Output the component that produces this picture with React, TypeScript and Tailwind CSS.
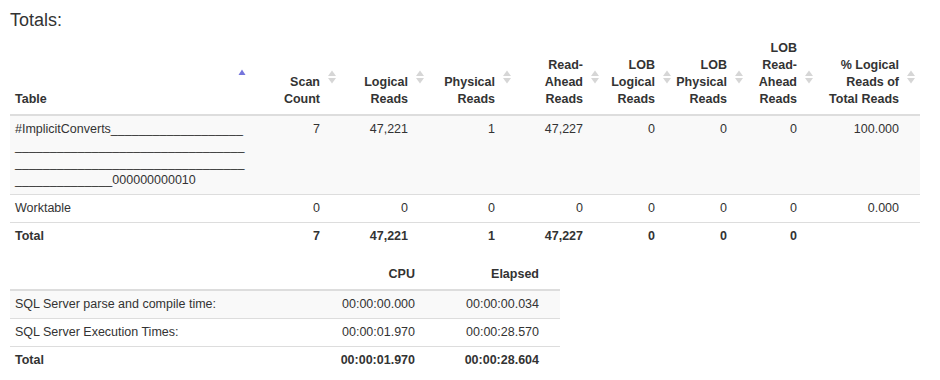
import React from 'react';

interface Column {
  label: string;
  width: string;
}

const columns: Column[] = [
  { label: 'Scan Count', width: 'w-[89px]' },
  { label: 'Logical Reads', width: 'w-[88px]' },
  { label: 'Physical Reads', width: 'w-[87px]' },
  { label: 'Read-Ahead Reads', width: 'w-[88px]' },
  { label: 'LOB Logical Reads', width: 'w-[72px]' },
  { label: 'LOB Physical Reads', width: 'w-[72px]' },
  { label: 'LOB Read-Ahead Reads', width: 'w-[70px]' },
  { label: '% Logical Reads of Total Reads', width: 'w-[102px]' },
];

const tempName =
  '#ImplicitConverts' + '_'.repeat(99) + '000000000010';

const rows = [
  { table: tempName, values: ['7', '47,221', '1', '47,227', '0', '0', '0', '100.000'] },
  { table: 'Worktable', values: ['0', '0', '0', '0', '0', '0', '0', '0.000'] },
];

const totals = ['7', '47,221', '1', '47,227', '0', '0', '0', ''];

const times = [
  { label: 'SQL Server parse and compile time:', cpu: '00:00:00.000', elapsed: '00:00:00.034' },
  { label: 'SQL Server Execution Times:', cpu: '00:00:01.970', elapsed: '00:00:28.570' },
];

// little sort glyph on the right of every header cell
const SortIcon: React.FC<{ active?: boolean }> = ({ active }) => {
  if (active) {
    return (
      <svg width="8" height="14" viewBox="0 0 8 14" className="absolute right-[6px] top-[calc(50%-5px)]">
        <polygon points="0.5,6 4,0.5 7.5,6" fill="#7575dc" />
      </svg>
    );
  }
  return (
    <svg width="8" height="14" viewBox="0 0 8 14" className="absolute right-[5px] top-[calc(50%-4px)]">
      <polygon points="0,6 4,0.5 8,6" fill="#d6d6d6" />
      <polygon points="0,8 8,8 4,13.5" fill="#d6d6d6" />
    </svg>
  );
};

export default function App() {
  return (
    <div className="min-h-[380px] w-[940px] bg-white px-[10px] pt-[10px] font-['Liberation_Sans',Arial,sans-serif] text-[12.5px] leading-[17.143px] text-[#333]">
      <h3 className="text-[18px] leading-[20px] font-normal">Totals:</h3>

      <table className="mt-[5px] w-[910px] table-fixed">
        <colgroup>
          <col className="w-[242px]" />
          {columns.map((c) => (
            <col key={c.label} className={c.width} />
          ))}
        </colgroup>
        <thead>
          <tr>
            <th className="relative border-b-2 border-[#ddd] pt-[5px] pb-[5px] pl-[5px] pr-[21px] text-left align-bottom font-bold">
              Table
              <SortIcon active />
            </th>
            {columns.map((c) => (
              <th
                key={c.label}
                className="relative border-b-2 border-[#ddd] pt-[5px] pb-[5px] pl-0 pr-[21px] text-right align-bottom font-bold"
              >
                {c.label}
                <SortIcon />
              </th>
            ))}
          </tr>
        </thead>
        <tbody>
          {rows.map((r, i) => (
            <tr key={i} className={i % 2 === 0 ? 'bg-[#f9f9f9]' : ''}>
              <td className="border-t border-[#ddd] py-[5px] pl-[5px] pr-[5px] align-top break-all">{r.table}</td>
              {r.values.map((v, j) => (
                <td key={j} className="border-t border-[#ddd] py-[5px] pl-0 pr-[21px] text-right align-top">
                  {v}
                </td>
              ))}
            </tr>
          ))}
        </tbody>
        <tfoot>
          <tr className="font-bold">
            <td className="border-t border-[#ddd] py-[5px] pl-[5px]">Total</td>
            {totals.map((v, j) => (
              <td key={j} className="border-t border-[#ddd] py-[5px] pl-0 pr-[21px] text-right">
                {v}
              </td>
            ))}
          </tr>
        </tfoot>
      </table>

      <table className="mt-[11px] w-[550px] table-fixed">
        <colgroup>
          <col className="w-[326px]" />
          <col className="w-[100px]" />
          <col className="w-[124px]" />
        </colgroup>
        <thead>
          <tr>
            <th className="border-b-2 border-[#ddd] py-[5px] pl-[5px]" />
            <th className="border-b-2 border-[#ddd] py-[5px] pr-[21px] text-right font-bold">CPU</th>
            <th className="border-b-2 border-[#ddd] py-[5px] pr-[21px] text-right font-bold">Elapsed</th>
          </tr>
        </thead>
        <tbody>
          {times.map((t, i) => (
            <tr key={t.label} className={i % 2 === 0 ? 'bg-[#f9f9f9]' : ''}>
              <td className="border-t border-[#ddd] py-[5px] pl-[5px]">{t.label}</td>
              <td className="border-t border-[#ddd] py-[5px] pr-[21px] text-right">{t.cpu}</td>
              <td className="border-t border-[#ddd] py-[5px] pr-[21px] text-right">{t.elapsed}</td>
            </tr>
          ))}
        </tbody>
        <tfoot>
          <tr className="font-bold">
            <td className="border-t border-[#ddd] py-[5px] pl-[5px]">Total</td>
            <td className="border-t border-[#ddd] py-[5px] pr-[21px] text-right">00:00:01.970</td>
            <td className="border-t border-[#ddd] py-[5px] pr-[21px] text-right">00:00:28.604</td>
          </tr>
        </tfoot>
      </table>
    </div>
  );
}
